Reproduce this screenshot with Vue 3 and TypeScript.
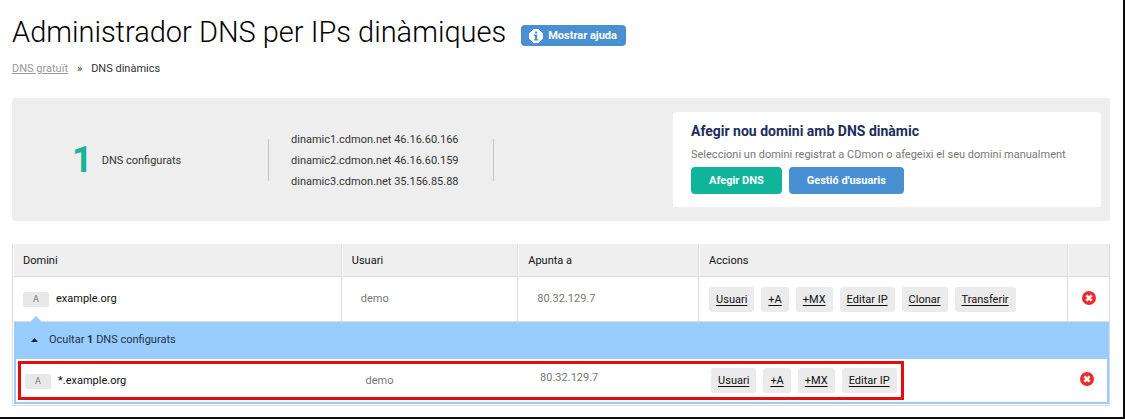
<script setup lang="ts">
import { ref } from 'vue'

interface DnsRecord {
  type: string
  domain: string
  user: string
  ip: string
  actions: string[]
}

const columns: string[] = ['Domini', 'Usuari', 'Apunta a', 'Accions']

const servers: string[] = [
  'dinamic1.cdmon.net 46.16.60.166',
  'dinamic2.cdmon.net 46.16.60.159',
  'dinamic3.cdmon.net 35.156.85.88',
]

const main: DnsRecord = {
  type: 'A',
  domain: 'example.org',
  user: 'demo',
  ip: '80.32.129.7',
  actions: ['Usuari', '+A', '+MX', 'Editar IP', 'Clonar', 'Transferir'],
}

const children: DnsRecord[] = [
  {
    type: 'A',
    domain: '*.example.org',
    user: 'demo',
    ip: '80.32.129.7',
    actions: ['Usuari', '+A', '+MX', 'Editar IP'],
  },
]

const expanded = ref(true)
</script>

<template>
  <main class="page">
    <header class="heading">
      <h1>Administrador DNS per IPs dinàmiques</h1>
      <button type="button" class="btn help">
        <svg width="14" height="14" viewBox="0 0 14 14" aria-hidden="true">
          <path d="M4.5.5h5l4 4v5l-4 4h-5l-4-4v-5z" fill="#fff" stroke="#fff" stroke-linejoin="round" />
          <path d="M6 2.4h2.2v2H6zM5 5.6h3.2v4.6h1v1.4H5v-1.4h1V7H5z" fill="#4890d2" />
        </svg>
        Mostrar ajuda
      </button>
    </header>

    <nav class="crumbs" aria-label="Ruta">
      <a href="#">DNS gratuït</a>
      <span>»</span>
      <span class="current">DNS dinàmics</span>
    </nav>

    <section class="summary">
      <div class="count"><strong>1</strong><span>DNS configurats</span></div>
      <ul class="servers">
        <li v-for="server in servers" :key="server">{{ server }}</li>
      </ul>
      <div class="add">
        <h2>Afegir nou domini amb DNS dinàmic</h2>
        <p>Seleccioni un domini registrat a CDmon o afegeixi el seu domini manualment</p>
        <div class="add-buttons">
          <button type="button" class="btn green">Afegir DNS</button>
          <button type="button" class="btn">Gestió d'usuaris</button>
        </div>
      </div>
    </section>

    <div class="frame">
      <table class="grid">
        <colgroup>
          <col class="c-domain" /><col class="c-user" /><col class="c-ip" /><col /><col class="c-del" />
        </colgroup>
        <thead>
          <tr>
            <th v-for="column in columns" :key="column" scope="col">{{ column }}</th>
            <th scope="col" aria-label="Eliminar"></th>
          </tr>
        </thead>
        <tbody>
          <tr class="record">
            <td><span class="tag">{{ main.type }}</span><span class="domain">{{ main.domain }}</span></td>
            <td class="value">{{ main.user }}</td>
            <td class="value">{{ main.ip }}</td>
            <td>
              <div class="actions">
                <a v-for="action in main.actions" :key="action" href="#">{{ action }}</a>
              </div>
            </td>
            <td class="remove">
              <button type="button" aria-label="Eliminar">
                <svg width="14" height="14" viewBox="0 0 14 14" aria-hidden="true">
                  <circle cx="7" cy="7" r="7" fill="#ee2b2b" />
                  <path d="M4.4 4.4l5.2 5.2M9.6 4.4L4.4 9.6" stroke="#fff" stroke-width="2.6" />
                </svg>
              </button>
            </td>
          </tr>
        </tbody>
      </table>

      <div class="nested">
        <button type="button" class="toggle" :aria-expanded="expanded" @click="expanded = !expanded">
          <svg width="7" height="4" viewBox="0 0 7 4" aria-hidden="true"><path d="M0 4L3.5 0 7 4z" fill="#123" /></svg>
          <span>Ocultar <b>1</b> DNS configurats</span>
        </button>
        <div v-if="expanded" class="nested-body">
          <table class="grid sub">
            <colgroup>
              <col class="c-domain" /><col class="c-user" /><col class="c-ip" /><col /><col class="c-del" />
            </colgroup>
            <tbody>
              <tr v-for="child in children" :key="child.domain" class="record">
                <td><span class="tag">{{ child.type }}</span><span class="domain">{{ child.domain }}</span></td>
                <td class="value">{{ child.user }}</td>
                <td class="value raised">{{ child.ip }}</td>
                <td>
                  <div class="actions">
                    <a v-for="action in child.actions" :key="action" href="#">{{ action }}</a>
                  </div>
                </td>
                <td class="remove">
                  <button type="button" aria-label="Eliminar">
                    <svg width="14" height="14" viewBox="0 0 14 14" aria-hidden="true">
                      <circle cx="7" cy="7" r="7" fill="#ee2b2b" />
                      <path d="M4.4 4.4l5.2 5.2M9.6 4.4L4.4 9.6" stroke="#fff" stroke-width="2.6" />
                    </svg>
                  </button>
                </td>
              </tr>
            </tbody>
          </table>
          <div class="highlight"></div>
        </div>
      </div>
    </div>
  </main>
</template>

<style>
body {
  margin: 0;
  background: #fff;
}
</style>

<style scoped>
* {
  box-sizing: border-box;
}
.page {
  padding: 12px 13px 11px 12px;
  border-right: 2px solid #0b0b0b;
  border-bottom: 2px solid #0b0b0b;
  font: 11px/16px Roboto, sans-serif;
  color: #333;
}
button {
  font: inherit;
  border: 0;
  cursor: pointer;
}
svg {
  display: block;
}
.heading {
  display: flex;
  align-items: center;
  gap: 15px;
}
h1 {
  margin: 0;
  font-size: 29px;
  font-weight: 300;
  line-height: 40px;
  color: #000;
}
.btn {
  height: 27px;
  padding: 0 18px;
  border-radius: 4px;
  background: #4890d2;
  color: #fff;
  font-weight: 700;
}
.btn.green {
  background: #10b499;
}
.btn.help {
  display: flex;
  align-items: center;
  gap: 5px;
  height: 21px;
  margin-top: 7px;
  padding: 0 9px 0 8px;
}
.crumbs {
  display: flex;
  gap: 9px;
  margin-top: 9px;
}
.crumbs a {
  color: #999;
}
.summary {
  display: flex;
  align-items: center;
  margin-top: 21px;
  padding: 14px 9px;
  border-radius: 3px;
  background: #eee;
}
.count {
  display: flex;
  align-items: center;
  gap: 9px;
  width: 247px;
  padding-left: 51px;
}
.count span {
  padding-top: 2px;
}
.count strong {
  font-size: 36px;
  line-height: 40px;
  color: #18b398;
}
.servers {
  width: 226px;
  margin: 0;
  padding: 1px 0 0 23px;
  list-style: none;
  line-height: 21px;
  background:
    linear-gradient(#c4c4c4, #c4c4c4) left center / 1px 42px no-repeat,
    linear-gradient(#c4c4c4, #c4c4c4) right center / 1px 42px no-repeat;
}
.add {
  width: 428px;
  margin-left: auto;
  padding: 10px 18px 13px;
  border-radius: 3px;
  background: #fff;
}
h2 {
  margin: 0;
  font-size: 14px;
  line-height: 18px;
  font-weight: 700;
  color: #1b2e5c;
}
.add p {
  margin: 7px 0 4px;
  color: #777;
  white-space: nowrap;
}
.add-buttons {
  display: flex;
  gap: 7px;
}
.frame {
  margin-top: 23px;
  padding-bottom: 1px;
  border: 1px solid #ddd;
  border-top: 0;
}
.grid {
  width: 100%;
  table-layout: fixed;
  border-collapse: separate;
  border-spacing: 0;
}
.c-domain {
  width: 30%;
}
.c-user {
  width: 16.1%;
}
.c-ip {
  width: 16.5%;
}
.c-del {
  width: 41px;
}
.sub .c-domain {
  width: 30.3%;
}
.sub .c-user {
  width: 16%;
}
th,
td {
  padding: 0 9px;
  border-left: 1px solid #fff;
  border-right: 1px solid #ddd;
  text-align: left;
}
th:last-child,
td:last-child {
  border-right: 0;
}
th {
  height: 33px;
  padding-top: 1px;
  border-bottom: 1px solid #ddd;
  background: #efefef;
  font-weight: 400;
  color: #111;
}
.record td {
  height: 44px;
}
.tag {
  display: inline-block;
  width: 26px;
  margin-right: 7px;
  border-radius: 2px;
  background: #e8e8e8;
  font-size: 9px;
  line-height: 15px;
  text-align: center;
  color: #777;
}
.domain {
  color: #111;
}
.record .value {
  padding-left: 18px;
  color: #777;
}
.record .raised {
  padding-bottom: 6px;
}
.actions {
  display: flex;
  gap: 7px;
}
.actions a {
  padding: 0 7px;
  border-radius: 3px;
  background: #ebebeb;
  line-height: 25px;
  color: #111;
  text-underline-offset: 2px;
}
.record .remove {
  padding: 0 13px 3px;
}
.remove button {
  display: block;
  padding: 0;
  background: none;
}
.nested {
  position: relative;
  margin-left: 1px;
  border-top: 1px solid #ddd;
}
.nested::before {
  content: '';
  position: absolute;
  left: 16px;
  top: -6px;
  border: 6px solid transparent;
  border-top: 0;
  border-bottom-color: #99ccff;
}
.toggle {
  display: flex;
  align-items: center;
  gap: 11px;
  width: 100%;
  height: 37px;
  padding: 0 0 2px 17px;
  background: #99ccff;
  color: #234;
}
.nested-body {
  position: relative;
  border: 2px solid #99ccff;
  border-top: 0;
}
.sub td {
  height: 43px;
  border-color: #fff;
}
.sub td:first-child {
  padding-left: 8px;
}
.highlight {
  position: absolute;
  inset: 2px 203px 2px 2px;
  border: 3px solid #e60c0c;
  pointer-events: none;
}
</style>
